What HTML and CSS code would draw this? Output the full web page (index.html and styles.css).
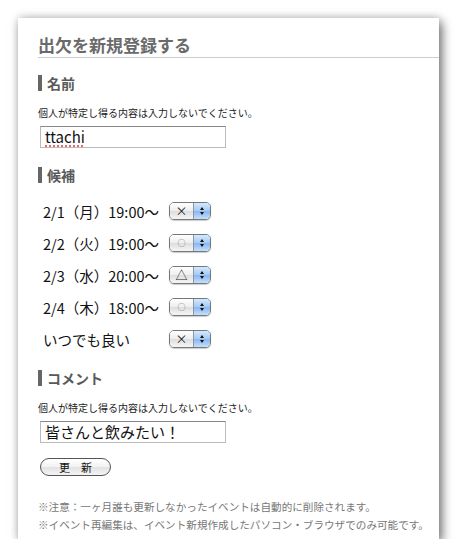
FILE: index.html
```
<!DOCTYPE html>
<html>
  <head>
    <meta charset="utf-8">
    <link rel="stylesheet" href="styles.css">
  </head>
  <body>
    <div id="panel">
      <h1 class="title">出欠を新規登録する</h1>

      <h2 class="section">名前</h2>
      <p class="note">個人が特定し得る内容は入力しないでください。</p>
      <div class="field"><span class="misspelled">ttachi</span></div>

      <h2 class="section section-cand">候補</h2>
      <div class="rows">
        <div class="row">
          <span class="date">2/1（月）19:00〜</span>
          <span class="sel"><span class="sel-val">×</span><span class="sel-btn"><i class="up"></i><i class="down"></i></span></span>
        </div>
        <div class="row">
          <span class="date">2/2（火）19:00〜</span>
          <span class="sel"><span class="sel-val small">○</span><span class="sel-btn"><i class="up"></i><i class="down"></i></span></span>
        </div>
        <div class="row">
          <span class="date">2/3（水）20:00〜</span>
          <span class="sel"><span class="sel-val">△</span><span class="sel-btn"><i class="up"></i><i class="down"></i></span></span>
        </div>
        <div class="row">
          <span class="date">2/4（木）18:00〜</span>
          <span class="sel"><span class="sel-val small">○</span><span class="sel-btn"><i class="up"></i><i class="down"></i></span></span>
        </div>
        <div class="row">
          <span class="date">いつでも良い</span>
          <span class="sel"><span class="sel-val">×</span><span class="sel-btn"><i class="up"></i><i class="down"></i></span></span>
        </div>
      </div>

      <h2 class="section section-comment">コメント</h2>
      <p class="note">個人が特定し得る内容は入力しないでください。</p>
      <div class="field">皆さんと飲みたい！</div>

      <div class="btn">更　新</div>

      <div class="footer">
        <p>※注意：一ヶ月誰も更新しなかったイベントは自動的に削除されます。</p>
        <p>※イベント再編集は、イベント新規作成したパソコン・ブラウザでのみ可能です。</p>
      </div>
    </div>
  </body>
</html>
```
FILE: styles.css
```
html {
  height: 100%;
}
body {
  margin: 0;
  background: #fff;
  font-family: "Noto Sans CJK JP", "Noto Sans", sans-serif;
  color: #222;
}
#panel {
  margin: 18px 0 0 18px;
  width: 421px;
  height: 521px;
  box-sizing: border-box;
  padding-left: 20px;
  background: #fff;
  box-shadow: 3px 4px 10px rgba(0, 0, 0, 0.55), 0 -2px 8px rgba(0, 0, 0, 0.12);
  overflow: hidden;
}
.title {
  margin: 0;
  padding-top: 15px;
  font-size: 17px;
  line-height: 24px;
  font-weight: bold;
  color: #6a6a6a;
  border-bottom: 1px solid #ccc;
}
.section {
  margin: 17px 0 0 0;
  border-left: 4px solid #666;
  padding-left: 5px;
  font-size: 14px;
  line-height: 16px;
  font-weight: bold;
  color: #5a5a5a;
}
.section-cand {
  margin-top: 19px;
}
.section-comment {
  margin-top: 15px;
}
.note {
  margin: 15px 0 0 0;
  font-size: 10px;
  line-height: 14px;
  color: #222;
}
.field {
  margin: 6px 0 0 2px;
  width: 186px;
  height: 22px;
  box-sizing: border-box;
  border: 1px solid #bbb;
  border-top-color: #888;
  padding: 0 4px;
  font-size: 15px;
  line-height: 20px;
  color: #111;
}
.misspelled {
  text-decoration: underline dotted #e33;
  text-underline-offset: 3px;
}
.rows {
  margin-top: 12px;
}
.row {
  display: flex;
  align-items: center;
  height: 32px;
}
.date {
  width: 126px;
  padding-left: 5px;
  font-size: 14.5px;
  color: #111;
}
.sel {
  display: flex;
  width: 42px;
  height: 18px;
  box-sizing: border-box;
  border: 1px solid #777;
  border-radius: 5px;
  overflow: hidden;
  box-shadow: 0 1px 1px rgba(0, 0, 0, 0.2);
}
.sel-val {
  flex: 1;
  text-align: center;
  font-size: 12px;
  line-height: 16px;
  color: #222;
  background: linear-gradient(#fff, #eee 50%, #ddd 51%, #f6f6f6);
}
.sel-val.small {
  font-size: 8px;
  color: #666;
}
.sel-btn {
  width: 16px;
  display: flex;
  flex-direction: column;
  align-items: center;
  justify-content: center;
  gap: 2px;
  border-left: 1px solid #89a;
  background: linear-gradient(#d6e8fd, #a5c9f5 50%, #86b6f0 51%, #c4e0fb);
}
.sel-btn i {
  width: 0;
  height: 0;
  border-left: 2.5px solid transparent;
  border-right: 2.5px solid transparent;
}
.sel-btn .up {
  border-bottom: 3px solid #111;
}
.sel-btn .down {
  border-top: 3px solid #111;
}
.btn {
  margin: 15px 0 0 2px;
  width: 71px;
  height: 18px;
  box-sizing: border-box;
  border: 1px solid #555;
  border-radius: 9px;
  text-align: center;
  font-size: 11px;
  line-height: 16px;
  color: #111;
  background: linear-gradient(#fff, #f2f2f2 50%, #e2e2e2 51%, #f4f4f4);
}
.footer {
  margin-top: 22px;
  font-size: 10.6px;
  line-height: 18px;
  color: #777;
  white-space: nowrap;
}
.footer p {
  margin: 0;
}
```
